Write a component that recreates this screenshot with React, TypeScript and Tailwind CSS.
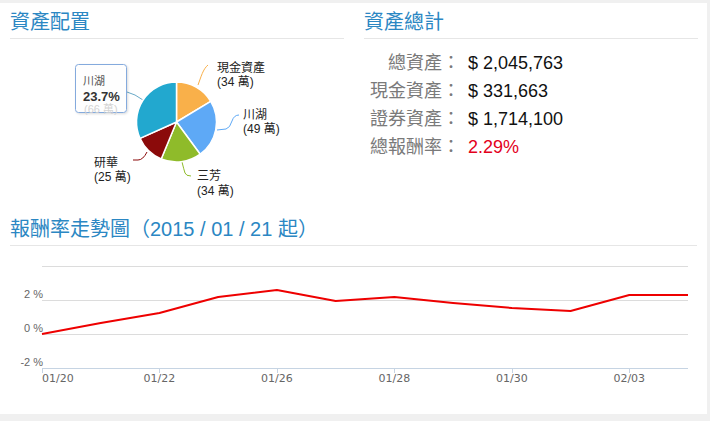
import React from "react";

const FONT = "font-['Liberation_Sans','Noto_Sans_CJK_TC',sans-serif]";

type Slice = { name: string; value: number; color: string };

// Pie slices, clockwise from 12 o'clock.
const slices: Slice[] = [
  { name: "現金資產", value: 34, color: "#f9b04a" },
  { name: "川湖", value: 49, color: "#5ea9f6" },
  { name: "三芳", value: 34, color: "#8fbb2a" },
  { name: "研華", value: 25, color: "#8b0a0a" },
  { name: "川湖", value: 66, color: "#22a8cf" },
];

const CX = 166.5;
const CY = 83;
const R = 40;

function point(deg: number, r = R): [number, number] {
  const a = (deg * Math.PI) / 180;
  return [CX + r * Math.sin(a), CY - r * Math.cos(a)];
}

function slicePath(from: number, to: number) {
  const [x1, y1] = point(from);
  const [x2, y2] = point(to);
  const large = to - from > 180 ? 1 : 0;
  return `M ${CX} ${CY} L ${x1} ${y1} A ${R} ${R} 0 ${large} 1 ${x2} ${y2} Z`;
}

function AllocationPie() {
  const total = slices.reduce((s, x) => s + x.value, 0);
  let acc = 0;
  const arcs = slices.map((s) => {
    const from = (acc / total) * 360;
    acc += s.value;
    return { ...s, from, to: (acc / total) * 360 };
  });

  return (
    <svg width="334" height="168" className={FONT}>
      <defs>
        <filter id="tipShadow" x="-20%" y="-20%" width="140%" height="140%">
          <feDropShadow dx="1" dy="1" stdDeviation="1.2" floodColor="#000" floodOpacity="0.15" />
        </filter>
      </defs>

      {/* connectors */}
      <g fill="none" strokeWidth="1">
        <path d="M 188 46 C 191 38, 193 30, 198 26" stroke="#f9b04a" />
        <path d="M 207 91 L 216 90 Q 220 89 222 82 Q 224 76 229 76" stroke="#5ea9f6" />
        <path d="M 172 123 Q 174 131 175 134 Q 176 137 181 137" stroke="#8fbb2a" />
        <path d="M 137 113 Q 133 121 128 121 L 123 121" stroke="#8b0a0a" />
        <path d="M 117 53 Q 125 55 133 61" stroke="#6aaac8" />
      </g>

      {arcs.map((a, i) => (
        <path key={i} d={slicePath(a.from, a.to)} fill={a.color} stroke="#fff" strokeWidth="1.5" strokeLinejoin="round" />
      ))}

      <g fontSize="12" fill="#222">
        <text x="207" y="33">現金資產</text>
        <text x="207" y="47">(34 萬)</text>
        <text x="233" y="80">川湖</text>
        <text x="233" y="94">(49 萬)</text>
        <text x="187" y="141">三芳</text>
        <text x="187" y="156">(34 萬)</text>
        <text x="84" y="128">研華</text>
        <text x="84" y="142">(25 萬)</text>
      </g>

      {/* hover tooltip */}
      <g filter="url(#tipShadow)">
        <rect x="65.5" y="25.5" width="51" height="48" rx="3" fill="#fff" fillOpacity="0.9" stroke="#84aadd" />
      </g>
      <text x="73" y="46" fontSize="11" fill="#555">川湖</text>
      <text x="73" y="62" fontSize="13" fontWeight="bold" fill="#333">23.7%</text>
      <text x="74" y="74" fontSize="11" fill="#d4d4d4">(66 萬)</text>
    </svg>
  );
}

const summary = [
  { label: "總資產", value: "$ 2,045,763", red: false },
  { label: "現金資產", value: "$ 331,663", red: false },
  { label: "證券資產", value: "$ 1,714,100", red: false },
  { label: "總報酬率", value: "2.29%", red: true },
];

// Return %, one point per trading day from 01/20.
const returns = [0, 0.65, 1.24, 2.18, 2.59, 1.94, 2.18, 1.82, 1.53, 1.35, 2.29, 2.29];
const ticks = ["01/20", "01/22", "01/26", "01/28", "01/30", "02/03"];

const X0 = 42;
const X1 = 688;
const yOf = (pct: number) => 88 - pct * 17;

function TrendChart() {
  const step = (X1 - X0) / (returns.length - 1);
  const pts = returns.map((v, i) => `${X0 + i * step},${yOf(v)}`).join(" ");

  return (
    <svg width="707" height="168">
      {[20, 54, 88].map((y) => (
        <line key={y} x1={X0} x2={X1} y1={y + 0.5} y2={y + 0.5} stroke="#dcdcdc" />
      ))}
      <line x1={X0} x2={X1} y1={122.5} y2={122.5} stroke="#c6d4e3" />
      {ticks.map((_, i) => {
        const x = Math.round(X0 + i * 2 * step) + 0.5;
        return <line key={i} x1={x} x2={x} y1={122} y2={127} stroke="#c6d4e3" />;
      })}

      <g fontSize="11" fill="#666" textAnchor="end" fontFamily="'Liberation Sans', sans-serif">
        <text x="43" y="52">2 %</text>
        <text x="43" y="86">0 %</text>
        <text x="43" y="120">-2 %</text>
      </g>

      <g fontSize="11" fill="#666" fontFamily="'DejaVu Sans', sans-serif">
        {ticks.map((t, i) => (
          <text key={t} x={i === 0 ? X0 : X0 + i * 2 * step} y="136" textAnchor={i === 0 ? "start" : "middle"}>
            {t}
          </text>
        ))}
      </g>

      <polyline points={pts} fill="none" stroke="#ee0000" strokeWidth="2" strokeLinejoin="round" />
    </svg>
  );
}

function SectionTitle({ children }: { children: React.ReactNode }) {
  return (
    <h2 className="border-b border-[#e6e6e6] pt-[6px] pb-[3px] text-[20px] leading-[26px] font-normal text-[#2b87c3]">
      {children}
    </h2>
  );
}

export default function App() {
  return (
    <div className={`h-[421px] w-[710px] bg-[#f0f0f0] pt-[3px] ${FONT}`}>
      <div className="h-[411px] w-[707px] bg-white">
        <div className="flex h-[207px]">
          <section className="w-[354px] px-[10px]">
            <SectionTitle>資產配置</SectionTitle>
            <AllocationPie />
          </section>
          <section className="flex-1 pr-[9px] pl-[10px]">
            <SectionTitle>資產總計</SectionTitle>
            <div className="pt-[10px]">
              {summary.map((row) => (
                <div key={row.label} className="flex h-[28px] items-center text-[18px]">
                  <span className="w-[96px] text-right text-[#7a7a7a]">{row.label}：</span>
                  <span className={`ml-[8px] ${row.red ? "text-[#e3001b]" : "text-[#111]"}`}>{row.value}</span>
                </div>
              ))}
            </div>
          </section>
        </div>

        <section>
          <div className="px-[10px]">
            <SectionTitle>
              報酬率走勢圖（2015 / 01 / 21 起）
            </SectionTitle>
          </div>
          <TrendChart />
        </section>
      </div>
    </div>
  );
}
